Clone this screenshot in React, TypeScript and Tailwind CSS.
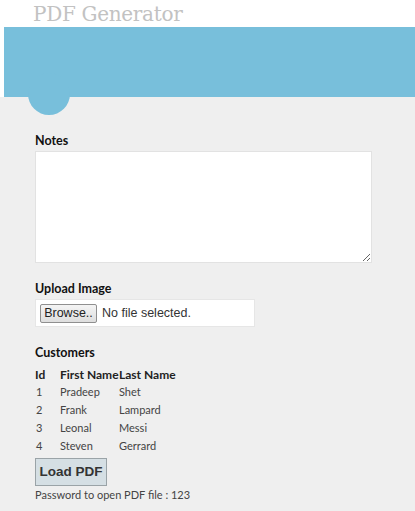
import React from "react";

const customers = [
  { id: 1, first: "Pradeep", last: "Shet" },
  { id: 2, first: "Frank", last: "Lampard" },
  { id: 3, first: "Leonal", last: "Messi" },
  { id: 4, first: "Steven", last: "Gerrard" },
];

const uiFont = { fontFamily: 'Lato, "Noto Sans", sans-serif' };
const arial = { fontFamily: '"Liberation Sans", Arial, sans-serif' };

export default function App() {
  return (
    <div className="w-[415px] h-[511px] overflow-hidden bg-[#efefef]" style={uiFont}>
      <div className="bg-white h-[27px] pl-[33px] overflow-hidden">
        <h1
          className="text-[20px] leading-[27px] text-[#c2c2c2] tracking-[-0.3px] pt-[1px]"
          style={{ fontFamily: '"DejaVu Serif", "Liberation Serif", serif' }}
        >
          PDF Generator
        </h1>
      </div>
      <div className="relative">
        <div className="flex">
          <div className="w-[4px] h-[70px] bg-white"></div>
          <div className="flex-1 h-[70px] bg-[#78bfdb]"></div>
        </div>
        <div className="absolute left-[28px] top-[46px] w-[42px] h-[42px] rounded-full bg-[#78bfdb]"></div>
      </div>

      <div className="pl-[35px] pt-[37px]">
        <label className="block text-[12.5px] font-bold text-[#111] leading-[14px]">Notes</label>
        <textarea className="block mt-[3px] w-[337px] h-[112px] bg-white border border-[#e2e2e2] outline-none resize" />

        <label className="block mt-[19px] text-[12.5px] font-bold text-[#111] leading-[14px]">Upload Image</label>
        <div className="mt-[3px] w-[220px] h-[28px] bg-white border border-[#e6e6e6] flex items-center pl-[4px]">
          <div
            className="w-[57px] h-[19px] border border-[#8f8f8f] rounded-[2px] bg-gradient-to-b from-[#f4f4f4] to-[#dedede] flex items-center justify-center text-[12.5px] text-[#222]"
            style={arial}
          >
            Browse..
          </div>
          <span className="ml-[5px] text-[12.5px] text-[#333]" style={arial}>
            No file selected.
          </span>
        </div>

        <label className="block mt-[19px] text-[12.5px] font-bold text-[#111] leading-[14px]">Customers</label>
        <table className="mt-[7px] border-collapse whitespace-nowrap">
          <thead>
            <tr className="h-[16px] text-[12px] font-bold text-[#222] text-left leading-[16px]">
              <th className="w-[25px] p-0">Id</th>
              <th className="w-[59px] p-0">First Name</th>
              <th className="p-0">Last Name</th>
            </tr>
          </thead>
          <tbody>
            {customers.map((c) => (
              <tr key={c.id} className="h-[18px] text-[11px] text-[#444]">
                <td className="p-0 pl-[1px]">{c.id}</td>
                <td className="p-0">{c.first}</td>
                <td className="p-0">{c.last}</td>
              </tr>
            ))}
          </tbody>
        </table>

        <button
          className="mt-[3px] w-[72px] h-[28px] bg-[#d5dfe4] border border-[#9aa3a7] text-[13.5px] font-bold text-[#333] flex items-center justify-center"
          style={arial}
        >
          Load PDF
        </button>
        <p className="mt-[1px] text-[11px] leading-[16px] text-[#444]">Password to open PDF file : 123</p>
      </div>
    </div>
  );
}
